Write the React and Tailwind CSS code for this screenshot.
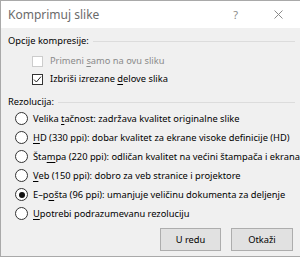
import React from 'react'

const font = { fontFamily: '"Noto Sans", "Open Sans", sans-serif' }

function U({ children }) {
  return <span className="underline underline-offset-[2px] decoration-[1px]">{children}</span>
}

function Checkbox({ checked, disabled, children }) {
  return (
    <div className="flex items-center h-[18px] pl-[31px]">
      <span className={`shrink-0 w-[11px] h-[11px] border bg-white flex items-center justify-center ${disabled ? 'border-[#cccccc]' : 'border-[#333333]'}`}>
        {checked && (
          <svg width="9" height="9" viewBox="0 0 9 9">
            <path d="M1 4.6 L3.4 7 L8 1.6" fill="none" stroke="#222" strokeWidth="1" />
          </svg>
        )}
      </span>
      <span className={`ml-[7px] whitespace-nowrap ${disabled ? 'text-[#8a8a8a]' : 'text-black'}`}>{children}</span>
    </div>
  )
}

function Radio({ checked, children }) {
  return (
    <div className="flex items-center h-[19px] pl-[14px]">
      <span className="shrink-0 w-[13px] h-[13px] rounded-full border border-[#333333] bg-white flex items-center justify-center">
        {checked && <span className="w-[6px] h-[6px] rounded-full bg-[#111]" />}
      </span>
      <span className="ml-[5px] text-black whitespace-nowrap">{children}</span>
    </div>
  )
}

function GroupLabel({ children, className }) {
  return (
    <div className={`flex items-center h-[14px] pl-[7px] pr-[5px] ${className}`}>
      <span className="text-black whitespace-nowrap">{children}</span>
      <span className="flex-1 h-px bg-[#dcdcdc] ml-[4px]" />
    </div>
  )
}

export default function App() {
  return (
    <div className="w-[300px] h-[257px] bg-[#f0f0f0] border-l border-t border-b border-[#a9a9a9] text-[9.3px] leading-none flex flex-col overflow-hidden" style={font}>
      <div className="h-[27px] bg-white flex items-center shrink-0">
        <span className="ml-[7px] text-[12px] text-[#6b6b6b]">Komprimuj slike</span>
        <span className="ml-auto mr-[36px] text-[11px] text-[#8a8a8a]">?</span>
        <svg className="mr-[17px]" width="9" height="9" viewBox="0 0 9 9">
          <path d="M0.5 0.5 L8.5 8.5 M8.5 0.5 L0.5 8.5" stroke="#8a8a8a" strokeWidth="1" />
        </svg>
      </div>

      <GroupLabel className="mt-[6px]">Opcije kompresije:</GroupLabel>
      <div className="mt-[4px]">
        <Checkbox disabled>Primeni <U>s</U>amo na ovu sliku</Checkbox>
        <Checkbox checked>Izbriši izrezane <U>d</U>elove slika</Checkbox>
      </div>

      <GroupLabel className="mt-[7px]">Rezolucija:</GroupLabel>
      <div>
        <Radio>Velika <U>t</U>ačnost: zadržava kvalitet originalne slike</Radio>
        <Radio><U>H</U>D (330 ppi): dobar kvalitet za ekrane visoke definicije (HD)</Radio>
        <Radio>Šta<U>m</U>pa (220 ppi): odličan kvalitet na većini štampača i ekrana</Radio>
        <Radio><U>V</U>eb (150 ppi): dobro za veb stranice i projektore</Radio>
        <Radio checked>E–p<U>o</U>šta (96 ppi): umanjuje veličinu dokumenta za deljenje</Radio>
        <Radio><U>U</U>potrebi podrazumevanu rezoluciju</Radio>
      </div>

      <div className="flex justify-end gap-[10px] mt-[5px] pr-[7px]">
        <button className="w-[61px] h-[23px] bg-[#e1e1e1] border border-[#adadad] text-black">U redu</button>
        <button className="w-[62px] h-[23px] bg-[#e1e1e1] border border-[#adadad] text-black">Otkaži</button>
      </div>
    </div>
  )
}
